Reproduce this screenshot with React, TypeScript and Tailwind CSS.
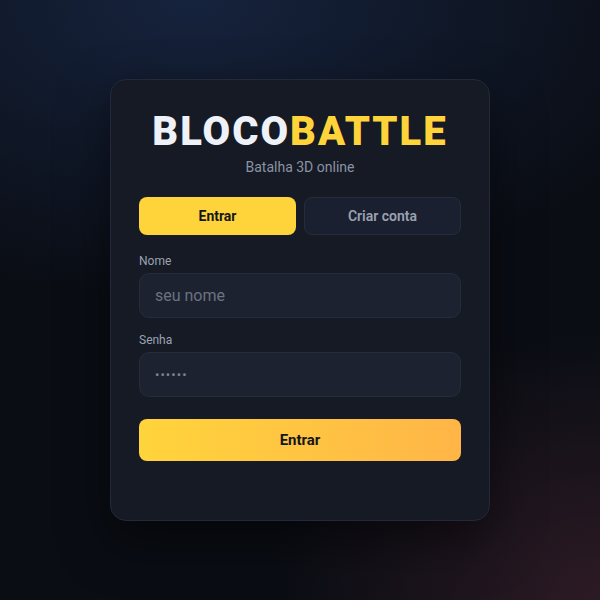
export default function App() {
  return (
    <div
      className="flex h-[600px] w-[600px] items-start justify-center bg-[#0a0d14] pt-[79px]"
      style={{
        fontFamily: "Roboto, 'Noto Sans', sans-serif",
        backgroundImage:
          "radial-gradient(ellipse 85% 50% at 32% 0%, #16233d 0%, rgba(22,35,61,0) 100%), radial-gradient(ellipse 55% 45% at 100% 100%, #2c1a24 0%, rgba(44,26,36,0) 100%)",
      }}
    >
      <div className="w-[380px] rounded-2xl border border-[#232938] bg-[#151a25] px-[28px] pb-[59px] pt-[28px] shadow-[0_20px_50px_rgba(0,0,0,0.5)]">
        <h1 className="text-center text-[40px] font-black leading-[48px] tracking-[0.05em]">
          <span className="text-[#eef1f8]">BLOCO</span>
          <span className="text-[#ffd43b]">BATTLE</span>
        </h1>
        <p className="mt-[1px] text-center text-sm leading-5 text-[#8b93a3]">Batalha 3D online</p>

        <div className="mt-5 grid grid-cols-2 gap-2">
          <button className="h-[38px] rounded-lg bg-[#ffd43b] text-sm font-bold text-[#14161c]">Entrar</button>
          <button className="h-[38px] rounded-lg border border-[#262c3a] bg-[#1b2030] text-sm font-semibold text-[#9aa2b1]">
            Criar conta
          </button>
        </div>

        <div className="mt-[18px]">
          <label className="block text-xs leading-4 text-[#9aa2b1]">Nome</label>
          <input
            placeholder="seu nome"
            className="mt-1 h-[45px] w-full rounded-[10px] border border-[#262c3a] bg-[#1d2231] px-[15px] text-base text-[#e5e7eb] outline-none placeholder:text-[#6b7280]"
          />
        </div>

        <div className="mt-[14px]">
          <label className="block text-xs leading-4 text-[#9aa2b1]">Senha</label>
          <input
            type="password"
            placeholder="••••••"
            className="mt-1 h-[45px] w-full rounded-[10px] border border-[#262c3a] bg-[#1d2231] px-[15px] text-[13px] tracking-[0.08em] text-[#e5e7eb] outline-none placeholder:text-[#7b8291]"
          />
        </div>

        <button className="mt-[22px] h-[42px] w-full rounded-lg bg-gradient-to-r from-[#ffd43b] to-[#ffb547] text-[15px] font-bold text-[#14161c]">
          Entrar
        </button>
      </div>
    </div>
  );
}
